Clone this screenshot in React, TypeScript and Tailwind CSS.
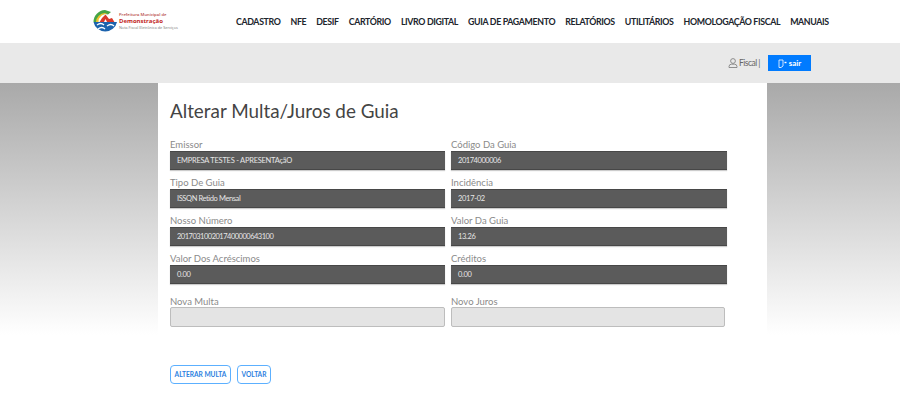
const NAV = ["CADASTRO", "NFE", "DESIF", "CARTÓRIO", "LIVRO DIGITAL", "GUIA DE PAGAMENTO", "RELATÓRIOS", "UTILITÁRIOS", "HOMOLOGAÇÃO FISCAL", "MANUAIS"];

const ROWS = [
  [["Emissor", "EMPRESA TESTES - APRESENTAçãO", "tracking-[-0.25px]"], ["Código Da Guia", "20174000006", "tracking-[-0.45px]"]],
  [["Tipo De Guia", "ISSQN Retido Mensal", "tracking-[-0.4px]"], ["Incidência", "2017-02", "tracking-[-0.3px]"]],
  [["Nosso Número", "2017031002017400000643100", "tracking-[-0.5px]"], ["Valor Da Guia", "13.26", "tracking-[-0.3px]"]],
  [["Valor Dos Acréscimos", "0.00", "tracking-[-0.3px]"], ["Créditos", "0.00", "tracking-[-0.3px]"]],
];

function Logo() {
  return (
    <div className="flex items-center gap-[1px]">
      <svg width="25" height="25" viewBox="0 0 25 25" className="shrink-0">
        <path d="M0.5 13 A12 12 0 0 1 12 1 L18 3 L15 5.5 A8.5 8.5 0 0 0 4 13 Z" fill="#46a546" />
        <path d="M3 13 A9.5 9.5 0 0 1 12 4 L15 5 A8 8 0 0 0 5.5 13 Z" fill="#f2c230" />
        <path d="M6 14 L9 9 L12.5 5.5 L16 10 L19 9 L22 14 Z" fill="#d8392b" />
        <path d="M10.5 14 L12.5 10 L14.5 14 Z" fill="#fff" />
        <path d="M0.5 13 H24 A12 12 0 0 1 0.5 13 Z" fill="#1c63ad" />
        <path d="M4 16 Q8 13 11 16 M5 20 Q9 17 12 20 M14 17 Q18 14 21 17" stroke="#fff" strokeWidth="1.3" fill="none" />
      </svg>
      <div className="flex flex-col font-['Open_Sans',sans-serif]">
        <span className="whitespace-nowrap text-[4.2px] font-semibold leading-[6px] text-[#b5473f]">Prefeitura Municipal de</span>
        <span className="text-[6px] font-bold leading-[7px] text-[#c2261d]">Demonstração</span>
        <span className="whitespace-nowrap text-[3.8px] leading-[6px] text-[#777]">Nota Fiscal Eletrônica de Serviços</span>
      </div>
    </div>
  );
}

function Field({ label, value, track, className }: { label: string; value: string; track: string; className: string }) {
  return (
    <div className={className}>
      <div className="h-[13px] whitespace-nowrap text-[9.5px] leading-[13px] text-[#8a8a8a]">{label}</div>
      <div className={`h-[19px] whitespace-nowrap border-y border-y-[#474747] bg-[#5b5b5b] pl-[7px] text-[7.5px] leading-[17px] text-[#e6e6e6] shadow-[0_1px_1px_#ccc] ${track}`}>{value}</div>
    </div>
  );
}

function Empty({ label, className }: { label: string; className: string }) {
  return (
    <div className={className}>
      <div className="h-[11px] text-[9.5px] leading-[11px] text-[#8a8a8a]">{label}</div>
      <div className="h-[20px] rounded-[2px] border border-[#bdbdbd] bg-[#e4e4e4]" />
    </div>
  );
}

export default function App() {
  return (
    <div className="h-[419px] w-[900px] overflow-hidden bg-white font-['Lato','Roboto',sans-serif]">
      <header className="flex h-[43px] items-center pl-[93px]">
        <div className="w-[143px] shrink-0"><Logo /></div>
        <nav className="flex gap-[10px] whitespace-nowrap text-[8.8px] font-bold tracking-[-0.35px] text-[#20242c]">
          {NAV.map((n) => <span key={n}>{n}</span>)}
        </nav>
      </header>
      <div className="flex h-[40px] items-center justify-end bg-[#e9e9e9] pr-[89px]">
        <svg width="10" height="10" viewBox="0 0 10 10" fill="none" stroke="#777" strokeWidth="0.8">
          <circle cx="5" cy="3" r="2.4" />
          <path d="M1 9.5 V8.5 A2.5 2.5 0 0 1 3.5 6.2 H6.5 A2.5 2.5 0 0 1 9 8.5 V9.5 Z" />
        </svg>
        <span className="ml-[1px] text-[8.5px] tracking-[-0.5px] text-[#666]">Fiscal |</span>
        <div className="ml-[8px] flex h-[16px] w-[43px] items-center justify-center gap-[2px] bg-[#007bff] text-[8px] font-bold text-white">
          <svg width="9" height="9" viewBox="0 0 9 9" fill="none" stroke="#fff" strokeWidth="0.8">
            <path d="M1 1 H5 V7 L3 8.5 H1 Z" />
            <path d="M6.5 3.5 H8.5" strokeWidth="1.4" />
          </svg>
          <span>sair</span>
        </div>
      </div>
      <main className="flex h-[336px] bg-[linear-gradient(#a9a9a9_0,#ffffff_252px)] pl-[158px]">
        <section className="h-full w-[609px] bg-white pl-[12px]">
          <h1 className="mt-[16px] h-[39px] text-[18.85px] leading-[23px] text-[#444]">Alterar Multa/Juros de Guia</h1>
          <div className="flex flex-col gap-[6px]">
            {ROWS.map((r) => (
              <div key={r[0][0]} className="flex gap-[6px]">
                <Field label={r[0][0]} value={r[0][1]} track={r[0][2]} className="w-[275px]" />
                <Field label={r[1][0]} value={r[1][1]} track={r[1][2]} className="w-[276px]" />
              </div>
            ))}
          </div>
          <div className="mt-[12px] flex gap-[6px]">
            <Empty label="Nova Multa" className="w-[275px]" />
            <Empty label="Novo Juros" className="w-[274px]" />
          </div>
          <div className="mt-[38px] flex gap-[6px]">
            <button className="h-[19px] w-[61px] rounded-[4px] border-[1.5px] border-[#5cb0ff] text-[6.6px] font-bold text-[#2b7fe0]">ALTERAR MULTA</button>
            <button className="h-[19px] w-[34px] rounded-[4px] border-[1.5px] border-[#5cb0ff] text-[6.6px] font-bold text-[#2b7fe0]">VOLTAR</button>
          </div>
        </section>
      </main>
    </div>
  );
}
